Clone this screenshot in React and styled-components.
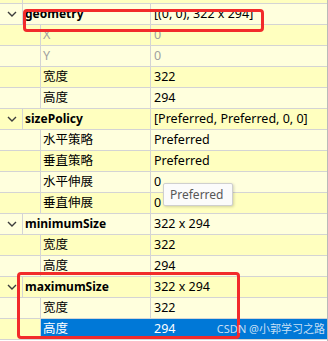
import React from 'react';
import styled, { createGlobalStyle } from 'styled-components';

const GlobalStyle = createGlobalStyle`
  body {
    margin: 0;
    background: #ffffff;
  }
`;

const LIGHT = '#ffffdd';
const YELLOW = '#ffffbf';
const GRID = '#d4d4d4';
const SELECT = '#0078d7';

const Browser = styled.div`
  position: relative;
  width: 328px;
  height: 341px;
  overflow: hidden;
  box-sizing: border-box;
  border-right: 1px solid #b9b9b9;
  font-family: "Noto Sans", "Noto Sans CJK SC", sans-serif;
  font-size: 12.5px;
  color: #000000;
`;

const TopStrip = styled.div`
  display: flex;
  height: 3px;
  background: ${YELLOW};
  border-bottom: 1px solid ${GRID};
  .branch {
    width: 22px;
    border-right: 1px solid ${GRID};
  }
`;

const Row = styled.div`
  display: flex;
  height: 20px;
  line-height: 20px;
  background: ${(p) => (p.$alt ? LIGHT : YELLOW)};
  border-bottom: 1px solid ${GRID};
`;

const Branch = styled.div`
  display: flex;
  align-items: center;
  flex: none;
  width: ${(p) => (p.$child ? 40 : 22)}px;
  padding-left: 7px;
  box-sizing: border-box;
`;

const Label = styled.div`
  flex: none;
  box-sizing: border-box;
  width: ${(p) => (p.$child ? 111 : 129)}px;
  padding-left: 2px;
  border-left: 1px solid ${GRID};
  border-right: 1px solid ${(p) => (p.$selected ? SELECT : GRID)};
  background: ${(p) => (p.$selected ? SELECT : 'transparent')};
  color: ${(p) => (p.$selected ? '#ffffff' : p.$disabled ? '#a0a0a0' : '#000000')};
  font-weight: ${(p) => (p.$group ? 700 : 400)};
  font-size: ${(p) => (p.$group ? 12 : 12.5)}px;
  white-space: nowrap;
  overflow: hidden;
`;

const Value = styled.div`
  flex: 1;
  padding-left: 3px;
  background: ${(p) => (p.$selected ? SELECT : 'transparent')};
  color: ${(p) => (p.$selected ? '#ffffff' : p.$disabled ? '#a0a0a0' : '#000000')};
  white-space: nowrap;
  overflow: hidden;
`;

const Chevron = () => (
  <svg width="10" height="6" viewBox="0 0 10 6">
    <path d="M1 1l4 4 4-4" fill="none" stroke="#3c3c3c" strokeWidth="1.4" />
  </svg>
);

const Marker = styled.div`
  position: absolute;
  left: ${(p) => p.$x}px;
  top: ${(p) => p.$y}px;
  width: ${(p) => p.$w}px;
  height: ${(p) => p.$h}px;
  box-sizing: border-box;
  border: 3px solid #f22b2b;
  border-radius: 4px;
  pointer-events: none;
`;

const Tooltip = styled.div`
  position: absolute;
  left: 163px;
  top: 183px;
  width: 70px;
  height: 23px;
  box-sizing: border-box;
  padding-left: 6px;
  line-height: 21px;
  background: #fbfbfb;
  border: 1px solid #cfcfcf;
  border-radius: 2px;
  box-shadow: 1px 1px 3px rgba(0, 0, 0, 0.18);
  color: #575757;
  font-size: 12px;
`;

const Watermark = styled.div`
  position: absolute;
  right: 2px;
  bottom: 6px;
  font-size: 11px;
  line-height: 13px;
  color: rgba(255, 255, 255, 0.78);
  font-family: "Noto Sans", "Noto Sans CJK SC", sans-serif;
`;

const rows = [
  { label: 'geometry', value: '[(0, 0), 322 x 294]', group: true },
  { label: 'X', value: '0', disabled: true },
  { label: 'Y', value: '0', disabled: true },
  { label: '宽度', value: '322' },
  { label: '高度', value: '294' },
  { label: 'sizePolicy', value: '[Preferred, Preferred, 0, 0]', group: true },
  { label: '水平策略', value: 'Preferred' },
  { label: '垂直策略', value: 'Preferred' },
  { label: '水平伸展', value: '0' },
  { label: '垂直伸展', value: '0' },
  { label: 'minimumSize', value: '322 x 294', group: true },
  { label: '宽度', value: '322' },
  { label: '高度', value: '294' },
  { label: 'maximumSize', value: '322 x 294', group: true },
  { label: '宽度', value: '322' },
  { label: '高度', value: '294', selected: true },
];

export default function App() {
  return (
    <>
      <GlobalStyle />
      <Browser>
        <TopStrip>
          <div className="branch" />
        </TopStrip>
        {rows.map((r, i) => (
          <Row key={i} $alt={i % 2 === 0}>
            <Branch $child={!r.group}>{r.group && <Chevron />}</Branch>
            <Label
              $child={!r.group}
              $group={r.group}
              $disabled={r.disabled}
              $selected={r.selected}
            >
              {r.label}
            </Label>
            <Value $disabled={r.disabled} $selected={r.selected}>
              {r.value}
            </Value>
          </Row>
        ))}
        <Tooltip>Preferred</Tooltip>
        <Marker $x={23} $y={9} $w={241} $h={23} />
        <Marker $x={17} $y={272} $w={223} $h={67} />
        <Watermark>CSDN @小郭学习之路</Watermark>
      </Browser>
    </>
  );
}
